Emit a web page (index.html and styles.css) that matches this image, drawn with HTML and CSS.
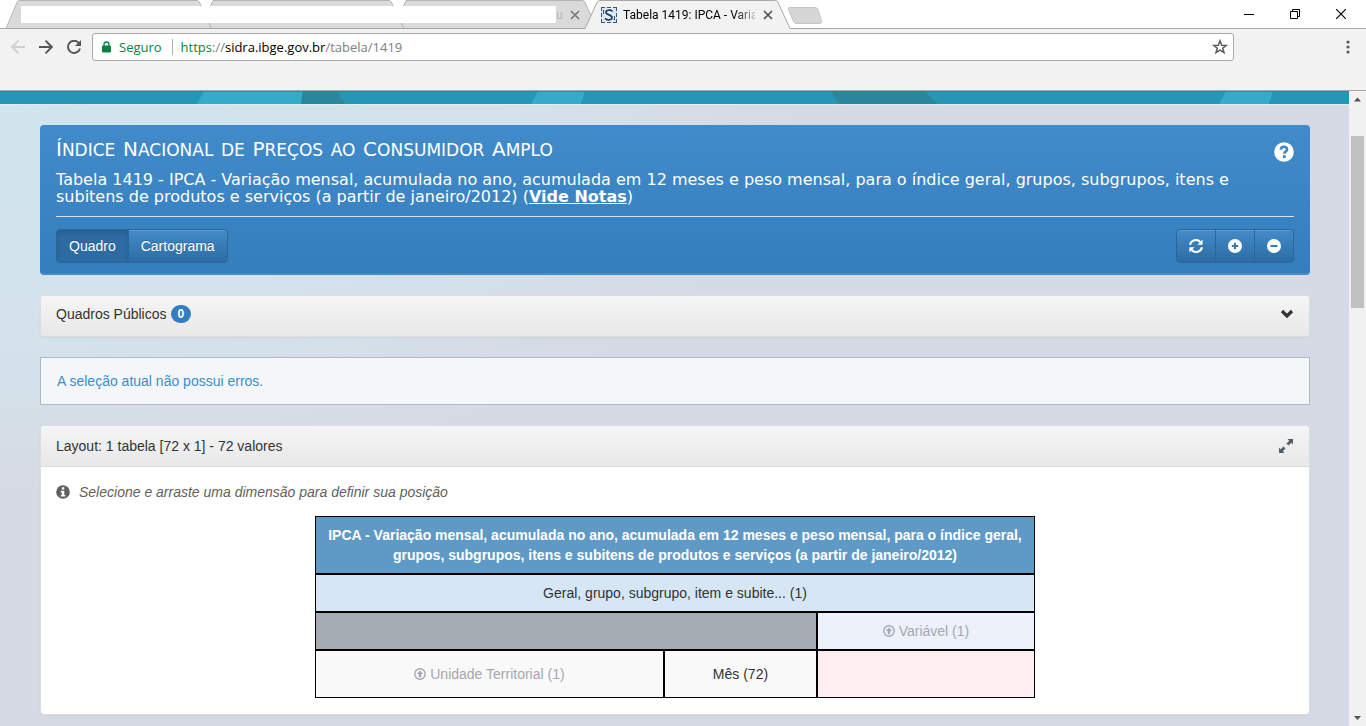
FILE: index.html
```html
<!DOCTYPE html>
<html lang="pt-BR">
<head>
<meta charset="utf-8">
<title>Tabela 1419: IPCA - Variação mensal</title>
<link rel="stylesheet" href="styles.css">
</head>
<body>
<header class="browser">
  <div class="tabstrip">
    <svg class="tab-shapes" width="830" height="29" aria-hidden="true">
      <g fill="#dadada" stroke="#b4b4b4">
        <path d="M393 28.500 406 0.500H582.500q1.500 0 2.500 2L597 28.500z"/>
        <path d="M200 28.500 213 0.500H389q1.500 0 2.500 2L404 28.500z"/>
        <path d="M6 28.500 17 2.500q1-2 2.500-2H197q1.500 0 2.500 2L211.500 28.500z"/>
      </g>
      <path d="M201 0.500H211L208 8H204zM394 0.500H404L401 8H397z" fill="#fff"/>
      <path d="M0 28.500H830" stroke="#a6a6a6"/>
      <path d="M585 28.500 597 2.500q1-2 2.500-2H775.500q1.500 0 2.500 2L790 28.500" fill="#f2f2f2" stroke="#a8a8a8"/>
      <path d="M586 28.500H789.500" stroke="#f2f2f2"/>
      <path d="M789 7.500H815q2 0 3 2L821.500 21q.5 2.500-1.500 2.500H796q-1.500 0-2.500-2L788.500 9.500q-.5-2 .5-2z" fill="#d6d6d6" stroke="#c4c4c4"/>
    </svg>
    <div class="tab-row">
      <div class="masked-tabs"></div>
      <span class="tab-rest">u</span>
      <button class="tab-close muted" aria-label="Fechar guia"><svg width="10" height="10"><path d="M1 1 9 9M9 1 1 9" stroke="currentColor" stroke-width="1.600"/></svg></button>
      <div class="active-tab">
        <svg width="16" height="16" aria-hidden="true"><rect width="16" height="16" fill="#dbe5ee"/><path d="M0 .5H4M6 .5H10M12 .5H16M0 15.500H4M6 15.500H10M12 15.500H16M.5 0V4M.5 6V10M.5 12V16M15.500 0V4M15.500 6V10M15.500 12V16" stroke="#31587f"/><path d="M2 3H4V7H2zM12 9H14V13H12z" fill="#31587f"/><path d="M11.500 4.500C10 2.500 5 2.500 5 5.500 5 8 11 7.500 11 10.500 11 13.500 6 13.500 4 11.500" fill="none" stroke="#fff" stroke-width="4"/><path d="M11.500 4.500C10 2.500 5 2.500 5 5.500 5 8 11 7.500 11 10.500 11 13.500 6 13.500 4 11.500" fill="none" stroke="#244b74" stroke-width="2"/></svg>
        <span class="tab-title">Tabela 1419: IPCA - Varia</span>
        <button class="tab-close" aria-label="Fechar guia"><svg width="10" height="10"><path d="M1 1 9 9M9 1 1 9" stroke="currentColor" stroke-width="1.600"/></svg></button>
      </div>
      <div class="window-controls">
        <button aria-label="Minimizar"><svg width="10" height="10"><path d="M0 5.500H10" stroke="#000"/></svg></button>
        <button aria-label="Restaurar"><svg width="10" height="10"><path d="M.5 2.500H7.500V9.500H.5zM2.500 2.500V.5H9.500V7.500H7.500" fill="none" stroke="#000"/></svg></button>
        <button aria-label="Fechar"><svg width="10" height="10"><path d="M0 0 10 10M10 0 0 10" stroke="#000" stroke-width="1.200"/></svg></button>
      </div>
    </div>
  </div>
  <div class="toolbar">
    <button class="nav-button off" aria-label="Voltar"><svg width="14" height="14"><path d="M14 7H1.500M7.500 .7 1.200 7 7.500 13.300" fill="none" stroke="currentColor" stroke-width="1.900"/></svg></button>
    <button class="nav-button" aria-label="Avançar"><svg width="14" height="14"><path d="M0 7H12.500M6.500 .7 12.800 7 6.500 13.300" fill="none" stroke="currentColor" stroke-width="1.900"/></svg></button>
    <button class="nav-button" aria-label="Recarregar"><svg width="14" height="14"><path d="M12 3.200A6.100 6.100 0 1 0 13 8.500" fill="none" stroke="currentColor" stroke-width="1.900"/><path d="M14 0V6H8z" fill="currentColor"/></svg></button>
    <div class="address">
      <svg width="9" height="12" aria-hidden="true"><rect y="4.500" width="9" height="7" rx="1" fill="#0b8043"/><path d="M2 6V3.500a2.500 2.500 0 0 1 5 0V6" fill="none" stroke="#0b8043" stroke-width="1.300"/></svg>
      <span class="secure">Seguro</span>
      <span class="url" role="textbox" aria-label="Endereço" contenteditable="true" spellcheck="false"><span class="scheme">https</span>://<span class="host">sidra.ibge.gov.br</span>/tabela/1419</span>
      <button class="star" aria-label="Favoritar"><svg width="16" height="16"><path d="M8 1.800 9.700 6.200 14.300 6.400 10.700 9.200 12 13.700 8 11.200 4 13.700 5.300 9.200 1.700 6.400 6.300 6.200z" fill="none" stroke="#5a5a5a" stroke-width="1.500"/></svg></button>
    </div>
    <button class="menu" aria-label="Menu"><svg width="4" height="14" fill="#5a5a5a"><circle cx="2" cy="2" r="1.600"/><circle cx="2" cy="7" r="1.600"/><circle cx="2" cy="12" r="1.600"/></svg></button>
  </div>
</header>

<div class="viewport">
  <div class="page">
    <svg class="banner" viewBox="0 0 1349 13" preserveAspectRatio="none" aria-hidden="true">
      <rect width="1349" height="13" fill="#2596b3"/>
      <path d="M197 13 204 0H303L301 13zM531 13 538 0H585L581 13zM1219 13 1226 0H1273L1269 13z" fill="#34abc7"/>
      <path d="M301 13 303 0H337L345 13zM839 13 831 0H924L938 13z" fill="#2a8799"/>
      <path d="M0 .5H1349" stroke="#2b7f94" stroke-opacity=".6"/>
    </svg>
    <main class="content">
      <section class="hero">
        <div class="hero-head">
          <h1><span class="cap">Í</span>ndice <span class="cap">N</span>acional de <span class="cap">P</span>reços ao <span class="cap">C</span>onsumidor <span class="cap">A</span>mplo</h1>
          <button class="help" aria-label="Ajuda"><svg width="20" height="20"><circle cx="10" cy="10" r="9.800" fill="#fff"/><path d="M6.900 7.600C7 3.700 13 3.800 13 7.400c0 2.200-2.700 2.200-2.700 4.400" fill="none" stroke="#3d86c6" stroke-width="2.600"/><rect x="8.900" y="13.200" width="2.800" height="2.800" fill="#3d86c6"/></svg></button>
        </div>
        <p class="subtitle">Tabela 1419 - IPCA - Variação mensal, acumulada no ano, acumulada em 12 meses e peso mensal, para o índice geral, grupos, subgrupos, itens e subitens de produtos e serviços (a partir de janeiro/2012) (<a href="#notas">Vide Notas</a>)</p>
        <div class="actions">
          <div class="group">
            <button class="btn pressed">Quadro</button>
            <button class="btn">Cartograma</button>
          </div>
          <div class="group">
            <button class="btn" aria-label="Atualizar"><svg width="14" height="14"><path d="M1 5.800A6 6 0 0 1 11.300 3M13 8.200A6 6 0 0 1 2.700 11" fill="none" stroke="#fff" stroke-width="2"/><path d="M13.600 .4V5.800H8.400zM.4 13.600V8.200H5.600z" fill="#fff"/></svg></button>
            <button class="btn" aria-label="Expandir tudo"><svg width="14" height="14"><circle cx="7" cy="7" r="7" fill="#fff"/><path d="M3.800 7H10.200M7 3.800V10.200" stroke="#367ab3" stroke-width="2"/></svg></button>
            <button class="btn" aria-label="Recolher tudo"><svg width="14" height="14"><circle cx="7" cy="7" r="7" fill="#fff"/><path d="M3.500 7H10.500" stroke="#367ab3" stroke-width="2"/></svg></button>
          </div>
        </div>
      </section>

      <section class="panel">
        <div class="panel-heading closed">
          <h2>Quadros Públicos <span class="badge">0</span></h2>
          <button class="icon-button" aria-label="Abrir"><svg width="14" height="10"><path d="M2 2 7 7 12 2" fill="none" stroke="#333" stroke-width="3.200"/></svg></button>
        </div>
      </section>

      <p class="alert" role="status">A seleção atual não possui erros.</p>

      <section class="panel">
        <div class="panel-heading open">
          <h2>Layout: 1 tabela [72 x 1] - 72 valores</h2>
          <button class="icon-button" aria-label="Tela cheia"><svg width="16" height="16" fill="#555d66"><path d="M9.500 1H15V6.500L13.300 4.800 10.500 7.600 8.500 5.600 11.300 2.800zM1 9.500V15H6.500L4.800 13.300 7.500 10.600 5.500 8.500 2.700 11.300z"/></svg></button>
        </div>
        <div class="panel-body">
          <p class="hint"><svg width="14" height="14" aria-hidden="true"><circle cx="7" cy="7" r="6.800" fill="#5f5f5f"/><path d="M5.800 2.300H8.300V4.500H5.800zM4.800 5.800H8.300V10H9.300V11.600H4.800V10H5.800V7.400H4.800z" fill="#fff"/></svg><em>Selecione e arraste uma dimensão para definir sua posição</em></p>
          <table class="layout">
            <colgroup><col class="col-row"><col class="col-month"><col class="col-var"></colgroup>
            <tr><th colspan="3">IPCA - Variação mensal, acumulada no ano, acumulada em 12 meses e peso mensal, para o índice geral, grupos, subgrupos, itens e subitens de produtos e serviços (a partir de janeiro/2012)</th></tr>
            <tr><td class="sub" colspan="3">Geral, grupo, subgrupo, item e subite... (1)</td></tr>
            <tr><td class="blank" colspan="2"></td><td class="column-dim"><svg width="12" height="12" aria-hidden="true"><use href="#up"/></svg> Variável (1)</td></tr>
            <tr class="tall"><td class="row-dim"><svg width="12" height="12" aria-hidden="true"><g id="up"><circle cx="6" cy="6" r="5.200" fill="none" stroke="#a6a6b4" stroke-width="1.400"/><path d="M6 2.400 9.200 6H7.200V9.300H4.800V6H2.800z" fill="#a6a6b4"/></g></svg> Unidade Territorial (1)</td><td class="month">Mês (72)</td><td class="values"></td></tr>
          </table>
        </div>
      </section>
    </main>
  </div>
  <div class="scrollbar" aria-hidden="true">
    <svg width="17" height="17"><path d="M5 10.500 8.500 6.500 12 10.500z" fill="#505050"/></svg>
    <div class="track"><div class="thumb"></div></div>
    <svg width="17" height="17"><path d="M5 7 8.500 11 12 7z" fill="#505050"/></svg>
  </div>
</div>
</body>
</html>
```
FILE: styles.css
```css
* { box-sizing: border-box; }
body {
  margin: 0;
  height: 100vh;
  display: flex;
  flex-direction: column;
  overflow: hidden;
  font: 14px/20px "Liberation Sans", Arial, sans-serif;
  color: #333;
}
h1, h2, p { margin: 0; font-weight: normal; }
button { margin: 0; padding: 0; border: 0; background: none; font: inherit; color: inherit; }
svg { display: block; flex: none; }

/* Browser window */
.browser { flex: none; border-bottom: 1px solid #a9a9a9; }
.tabstrip { position: relative; height: 29px; background: #fff; border-bottom: 1px solid #a9a9a9; }
.tab-shapes { position: absolute; left: 0; top: 0; }
.tab-row {
  position: relative;
  display: flex;
  align-items: center;
  height: 29px;
  padding-left: 21px;
  font: 12px/16px Roboto, sans-serif;
}
.masked-tabs { width: 535px; height: 17px; background: #fff; }
.tab-rest { width: 14px; color: #bbb; }
.tab-close { color: #4a4a4a; }
.tab-close.muted { color: #777; }
.active-tab { display: flex; align-items: center; width: 173px; margin-left: 21px; }
.tab-title {
  width: 132px;
  margin: 0 8px 0 6px;
  white-space: nowrap;
  color: #000;
  -webkit-mask-image: linear-gradient(90deg, #000 112px, rgba(0, 0, 0, .2) 132px);
  mask-image: linear-gradient(90deg, #000 112px, rgba(0, 0, 0, .2) 132px);
}
.window-controls { display: flex; gap: 36px; margin-left: auto; padding: 0 20px 2px 0; }
.toolbar {
  display: flex;
  align-items: flex-start;
  height: 61px;
  padding: 4px 16px 0 11px;
  background: #f2f2f2;
}
.nav-button { display: flex; align-items: center; width: 28px; height: 28px; color: #555; }
.nav-button.off { color: #cfcfcf; }
.nav-button:nth-child(3) { width: 25px; }
.address {
  flex: 1;
  display: flex;
  align-items: center;
  height: 28px;
  padding: 0 5px 0 9px;
  background: #fff;
  border: 1px solid #a9a9a9;
  border-radius: 3px;
  font: 13px/18px "Open Sans", sans-serif;
}
.secure { margin-left: 8px; padding-right: 10px; border-right: 1px solid #b0b0b0; line-height: 16px; color: #0b8043; }
.url { flex: 1; margin-left: 8px; color: #808080; outline: 0; }
.scheme { color: #0b8043; }
.host { color: #000; }
.menu { display: flex; align-items: center; height: 28px; margin-left: 112px; }

/* Page */
.viewport { flex: 1; min-height: 0; display: flex; }
.page {
  flex: 1;
  min-width: 0;
  overflow: hidden;
  background: radial-gradient(ellipse 800px 400px at 0 0, #d0e5ed, #d4e1ea 70%, #d6dae4);
}
.banner { width: 100%; height: 14px; border-bottom: 1px solid #e4edf2; }
.content { display: flex; flex-direction: column; gap: 20px; padding: 20px 39px 20px 40px; }
.hero {
  padding: 11px 16px 10px 16px;
  border-radius: 4px;
  border-bottom: 2px solid #428bca;
  background: linear-gradient(#428bca, #357ebd);
  color: #fff;
  font-family: "DejaVu Sans", Verdana, sans-serif;
}
.hero-head { display: flex; justify-content: space-between; align-items: flex-start; height: 28px; }
h1 { font-size: 24px; line-height: 24px; font-variant: small-caps; }
.cap { font-size: 20px; }
.help { margin-top: 6px; }
.subtitle { padding: 7px 0 11px; border-bottom: 1px solid #d6e2ee; font-size: 16px; line-height: 17px; }
.subtitle a { color: #fff; font-weight: bold; }
.actions { display: flex; justify-content: space-between; margin-top: 12px; }
.group { display: flex; }
.btn {
  display: flex;
  align-items: center;
  height: 34px;
  padding: 0 12px;
  border: 1px solid #2b669a;
  background: linear-gradient(#428bca, #2d6ca2);
  box-shadow: inset 0 1px 0 rgba(255, 255, 255, .15);
  color: #fff;
  font: 14px/20px "Liberation Sans", Arial, sans-serif;
  text-shadow: 0 -1px 0 rgba(0, 0, 0, .2);
}
.btn + .btn { margin-left: -1px; }
.btn:first-child { border-radius: 4px 0 0 4px; }
.btn:last-child { border-radius: 0 4px 4px 0; }
.btn.pressed { background: #2d6ca2; box-shadow: inset 0 3px 5px rgba(0, 0, 0, .125); }

.panel { border: 1px solid #ddd; border-radius: 4px; background: #fff; box-shadow: 0 1px 2px rgba(0, 0, 0, .05); }
.panel-heading {
  display: flex;
  justify-content: space-between;
  align-items: center;
  height: 40px;
  padding: 0 15px;
  border-radius: 3px;
  background: linear-gradient(#f5f5f5, #e8e8e8);
}
.panel-heading.closed { padding-bottom: 4px; }
.panel-heading.open { height: 41px; border-bottom: 1px solid #ddd; border-radius: 3px 3px 0 0; }
h2 { display: flex; align-items: center; gap: 4px; font-size: 14px; line-height: 20px; }
.badge { padding: 3px 7px; border-radius: 10px; background: #357ebd; color: #fff; font-size: 12px; line-height: 12px; font-weight: bold; }
.alert { padding: 13px 16px; border: 1px solid #b2b9c0; background: #f3f7fa; color: #428bca; }
.panel-body { padding: 15px 15px 16px; }
.hint { display: flex; align-items: center; gap: 9px; margin-bottom: 14px; color: #5f5f5f; }

.layout { width: 720px; max-width: 100%; margin: 0 auto; table-layout: fixed; border-spacing: 0; text-align: center; }
.col-row { width: 349px; }
.col-month { width: 153px; }
.col-var { width: 218px; }
.layout th, .layout td { height: 38px; padding: 8px; border: 1px solid #000; }
.layout .tall td { height: 48px; }
.layout th { background: #5f99c6; color: #fff; }
.layout svg { display: inline-block; vertical-align: -1px; }
.layout .sub { background: #d6e6f5; }
.layout .blank { background: #a4abb1; }
.layout .column-dim { background: #edf2fa; color: #a6a6b4; }
.layout .row-dim { background: #f9f9f9; color: #a6a6b4; }
.layout .month { background: #f9f9f9; }
.layout .values { background: #fdefef; }

.scrollbar { flex: none; display: flex; flex-direction: column; width: 17px; background: #f1f1f1; }
.track { flex: 1; padding: 28px 2px 0; }
.thumb { height: 30%; background: #c1c1c1; }
```
